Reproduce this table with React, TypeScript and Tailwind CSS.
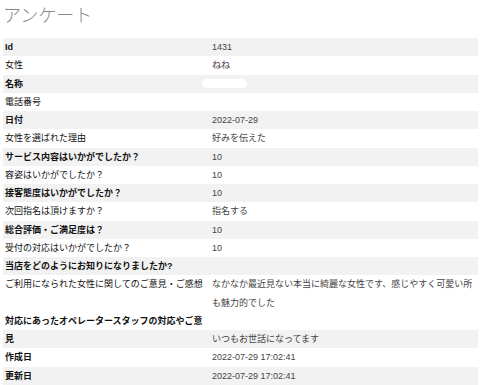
const rows: { label: string; value?: string; bold?: boolean; gray?: boolean; blank?: boolean }[] = [
  { label: "Id", value: "1431", bold: true, gray: true },
  { label: "女性", value: "ねね" },
  { label: "名称", blank: true, bold: true, gray: true },
  { label: "電話番号", value: "" },
  { label: "日付", value: "2022-07-29", bold: true, gray: true },
  { label: "女性を選ばれた理由", value: "好みを伝えた" },
  { label: "サービス内容はいかがでしたか？", value: "10", bold: true, gray: true },
  { label: "容姿はいかがでしたか？", value: "10" },
  { label: "接客態度はいかがでしたか？", value: "10", bold: true, gray: true },
  { label: "次回指名は頂けますか？", value: "指名する" },
  { label: "総合評価・ご満足度は？", value: "10", bold: true, gray: true },
  { label: "受付の対応はいかがでしたか？", value: "10" },
]

const App = () => {
  return (
    <div
      className="w-[480px] h-[385px] overflow-hidden bg-white px-[3px] text-[9px] leading-[18.25px] text-[#333]"
      style={{ fontFamily: '"Liberation Sans", "Noto Sans CJK JP", sans-serif' }}
    >
      <h1 className="h-[38px] pt-[4px] text-[18px] leading-[24px] font-light text-[#888]">アンケート</h1>
      <div className="w-[475px]">
        {rows.map((row, i) => (
          <div key={i} className={`flex ${row.gray ? "bg-[#f2f2f2]" : "bg-white"}`}>
            <div className={`w-[209px] shrink-0 pl-[2px] text-[#111] ${row.bold ? "font-bold" : ""}`}>{row.label}</div>
            <div className="flex-1 flex items-center">
              {row.blank ? (
                <span className="-ml-[10px] block w-[45px] h-[9px] rounded-full bg-white" />
              ) : (
                <span className="text-[#444]">{row.value}</span>
              )}
            </div>
          </div>
        ))}
        <div className="flex bg-[#f2f2f2]">
          <div className="w-[209px] shrink-0 pl-[2px] font-bold text-[#111]">当店をどのようにお知りになりましたか?</div>
          <div className="flex-1" />
        </div>
        <div className="flex bg-white">
          <div className="w-[209px] shrink-0 pl-[2px] text-[#111] whitespace-nowrap">ご利用になられた女性に関してのご意見・ご感想</div>
          <div className="flex-1 text-[#444]">なかなか最近見ない本当に綺麗な女性です、感じやすく可愛い所も魅力的でした</div>
        </div>
        <div className="bg-white pl-[2px] font-bold text-[#111] whitespace-nowrap">対応にあったオペレータースタッフの対応やご意</div>
        <div className="flex bg-[#f2f2f2]">
          <div className="w-[209px] shrink-0 pl-[2px] font-bold text-[#111]">見</div>
          <div className="flex-1 text-[#444]">いつもお世話になってます</div>
        </div>
        <div className="flex bg-white">
          <div className="w-[209px] shrink-0 pl-[2px] font-bold text-[#111]">作成日</div>
          <div className="flex-1 text-[#444]">2022-07-29 17:02:41</div>
        </div>
        <div className="flex bg-[#f2f2f2]">
          <div className="w-[209px] shrink-0 pl-[2px] font-bold text-[#111]">更新日</div>
          <div className="flex-1 text-[#444]">2022-07-29 17:02:41</div>
        </div>
      </div>
    </div>
  )
}

export default App
